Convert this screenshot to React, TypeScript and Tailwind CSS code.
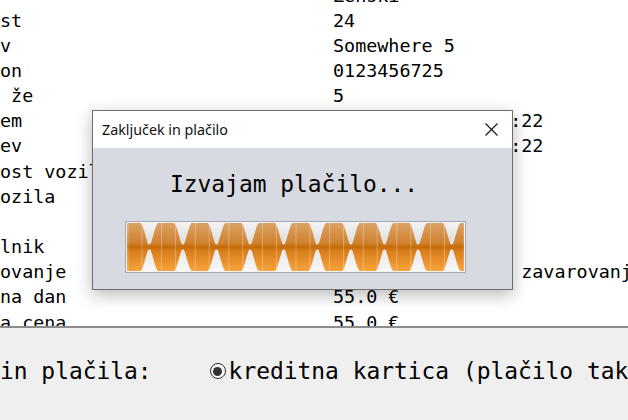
import React from "react";

const mono = { fontFamily: '"DejaVu Sans Mono", "Liberation Mono", monospace' };

const rows: [string, string][] = [
  ["", "Ženski"],
  ["st", "24"],
  ["v", "Somewhere 5"],
  ["on", "0123456725"],
  [" že", "5"],
  ["em", "12. 05. 2023, 10:22"],
  ["ev", "14. 05. 2023, 10:22"],
  ["ost vozil", "Da"],
  ["ozila", "Opel"],
  ["", ""],
  ["lnik", "Ne"],
  ["ovanje", "Osnovno in polno zavarovanje"],
  ["na dan", "55.0 €"],
  ["a cena", "55.0 €"],
];

const W = 337;
const H = 48;
const P = 33.6;
const N0 = 22.3; // first neck position (local x)

function shape(x: number) {
  let d = (x - N0) / P;
  d = d - Math.round(d);
  const dist = Math.abs(d) * P; // px from nearest neck
  if (dist <= 0.8) return 0;
  if (dist >= 9.5) return 1;
  const t = (dist - 0.8) / 8.7;
  return Math.pow(0.5 - 0.5 * Math.cos(Math.PI * t), 0.7);
}

function buildPath() {
  const top: string[] = [];
  const bot: string[] = [];
  for (let x = 0; x <= W; x += 0.5) {
    const s = shape(x);
    const h = 2.6 + 21.6 * s;
    top.push(`${x.toFixed(1)},${(24 - h).toFixed(2)}`);
    bot.push(`${x.toFixed(1)},${(24 + h).toFixed(2)}`);
  }
  return "M" + top.join(" L") + " L" + bot.reverse().join(" L") + " Z";
}
const wavePath = buildPath();

const stripes: number[] = [];
for (let k = -1; k < 11; k++) {
  const c = N0 - P / 2 + P * k;
  stripes.push(c - 5, c + 9);
}

function Wave() {
  return (
    <svg width={W} height={H} viewBox={`0 0 ${W} ${H}`} className="block">
      <defs>
        <linearGradient id="bgg" x1="0" y1="0" x2="0" y2="1">
          <stop offset="0" stopColor="#f3f3f3" />
          <stop offset="0.45" stopColor="#dcdcdc" />
          <stop offset="0.55" stopColor="#e8e8e8" />
          <stop offset="1" stopColor="#f8f8f8" />
        </linearGradient>
        <linearGradient id="org" x1="0" y1="0" x2="0" y2="1">
          <stop offset="0" stopColor="#daa366" />
          <stop offset="0.42" stopColor="#d0812e" />
          <stop offset="0.5" stopColor="#c46a06" />
          <stop offset="0.58" stopColor="#d87d1c" />
          <stop offset="1" stopColor="#f8a43c" />
        </linearGradient>
        <clipPath id="wclip">
          <path d={wavePath} />
        </clipPath>
      </defs>
      <rect x="0" y="0" width={W} height={H} fill="url(#bgg)" />
      <path d={wavePath} fill="url(#org)" />
      <g clipPath="url(#wclip)">
        {stripes.map((sx, i) => (
          <rect key={i} x={sx} y="0" width="1" height={H} fill="#ffffff" opacity="0.3" />
        ))}
      </g>
    </svg>
  );
}

export default function App() {
  return (
    <div className="relative w-[628px] h-[420px] overflow-hidden bg-white text-black">
      <div className="h-[326px] overflow-hidden bg-white text-[18.4px]" style={mono}>
        <div className="mt-[-17.5px]">
          {rows.map(([l, r], i) => (
            <div key={i} className="grid grid-cols-[333px_1fr] h-[25.17px] leading-[25.17px] whitespace-pre">
              <div>{l}</div>
              <div className="whitespace-nowrap">{r}</div>
            </div>
          ))}
        </div>
      </div>
      <div className="h-[94px] border-t-2 border-[#8c8c8c] bg-[#efefef]">
        <div className="mt-[30px] flex items-center h-[26px] text-[22.9px] leading-[26px] whitespace-nowrap" style={mono}>
          <span>in plačila:</span>
          <span className="ml-[58px] flex h-[16px] w-[16px] shrink-0 items-center justify-center rounded-full border-[1.5px] border-[#2b2b2b] bg-white">
            <span className="h-[9px] w-[9px] rounded-full bg-[#333333]" />
          </span>
          <span className="ml-[3px]">kreditna kartica (plačilo takoj)</span>
        </div>
      </div>

      <div className="absolute left-[92px] top-[110px] w-[421px] h-[180px] border border-[#6f6f6f] bg-[#d7dae1] shadow-[0_5px_16px_rgba(0,0,0,0.28)] flex flex-col">
        <div className="h-[37px] bg-white flex items-center justify-between pl-[9px] pr-[14px]">
          <span className="text-[14.3px] text-[#111]" style={{ fontFamily: '"Noto Sans", "Open Sans", sans-serif' }}>
            Zaključek in plačilo
          </span>
          <svg width="13" height="13" viewBox="0 0 13 13">
            <path d="M0.5 0.5 L12.5 12.5 M12.5 0.5 L0.5 12.5" stroke="#111" strokeWidth="1.1" fill="none" />
          </svg>
        </div>
        <div className="flex-1 flex flex-col">
          <div className="mt-[23px] pl-[77px] h-[26px] leading-[26px] text-[22.9px] whitespace-nowrap" style={mono}>
            Izvajam plačilo...
          </div>
          <div className="mt-[24px] ml-[32px] w-[341px] h-[52px] border border-[#a5a9b1] bg-[#f4f4f4] p-[1px]">
            <Wave />
          </div>
        </div>
      </div>
    </div>
  );
}
